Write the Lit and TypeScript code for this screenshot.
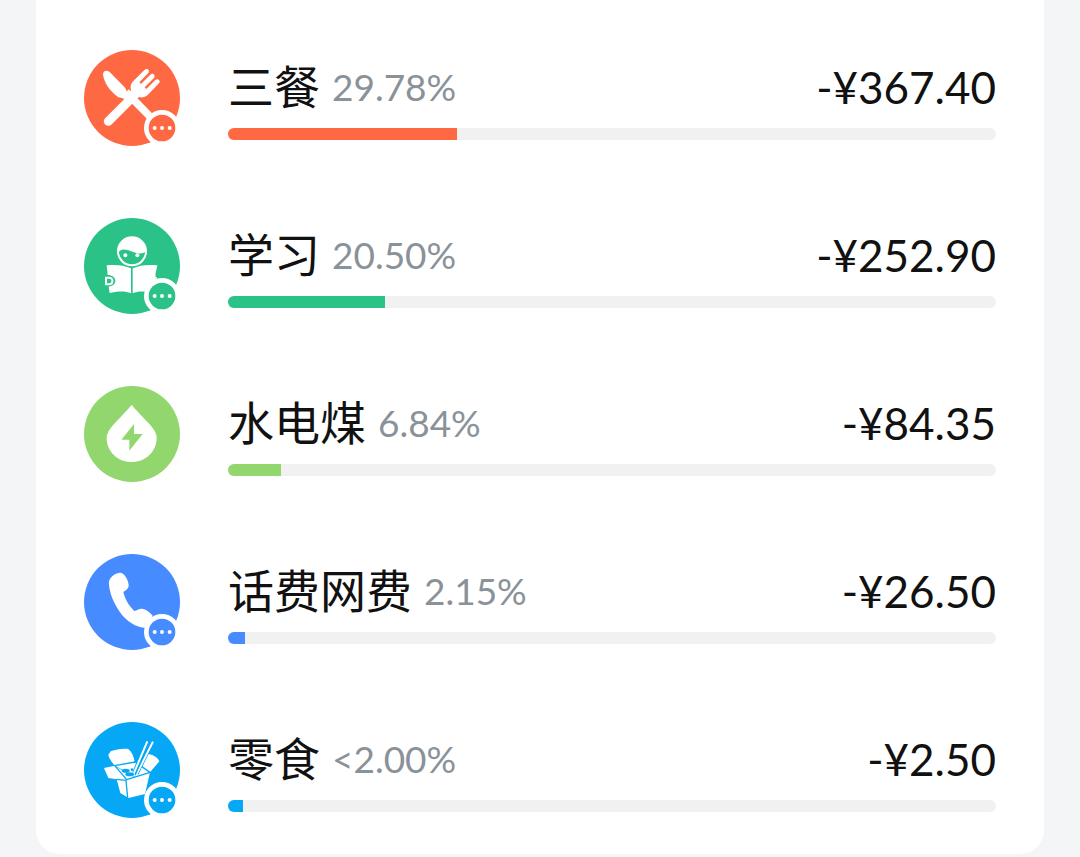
import { LitElement, html, svg, css, nothing } from "lit";
import type { SVGTemplateResult } from "lit";
import { customElement, property } from "lit/decorators.js";

interface Category {
  name: string;
  share: number;
  shareText: string;
  amount: string;
  color: string;
  icon: string;
  shared: boolean;
}

const CATEGORIES: Category[] = [
  { name: "三餐", share: 29.78, shareText: "29.78%", amount: "-¥367.40", color: "#fe6842", icon: "meals", shared: true },
  { name: "学习", share: 20.5, shareText: "20.50%", amount: "-¥252.90", color: "#2ac286", icon: "study", shared: true },
  { name: "水电煤", share: 6.84, shareText: "6.84%", amount: "-¥84.35", color: "#92d76d", icon: "utilities", shared: false },
  { name: "话费网费", share: 2.15, shareText: "2.15%", amount: "-¥26.50", color: "#468bff", icon: "phone", shared: true },
  { name: "零食", share: 2, shareText: "<2.00%", amount: "-¥2.50", color: "#06a8f5", icon: "snacks", shared: true },
];

// Glyphs share a 288-unit disc centred on (168, 168); currentColor is the disc colour.
const GLYPHS: Record<string, SVGTemplateResult> = {
  meals: svg`
    <path fill="#fff" d="M81 96C82 86 92 83 101 90L146 136C151 142 150 149 156 154L168 166L154 180C146 170 139 168 127 166C100 146 83 120 81 96Z"/>
    <path d="M97 238L166 169" stroke="#fff" stroke-width="27" stroke-linecap="round"/>
    <path d="M150 150L228 230" stroke="#fff" stroke-width="23"/>
    <path fill="#fff" d="M154 156L165 146C162 133 164 125 172 117L206 83C214 77 223 86 217 93L190 121L195 126L223 98C230 91 240 100 234 108L206 136L211 141L238 114C246 107 255 117 249 124L215 159C207 166 198 168 189 165L176 177Z"/>`,
  study: svg`
    <circle cx="168" cy="124" r="42" fill="none" stroke="#fff" stroke-width="6"/>
    <path fill="#fff" d="M125 124C124 97 144 81 168 81C194 81 212 101 211 124C197 134 184 130 171 126C155 120 140 114 130 124Z"/>
    <circle cx="148" cy="136" r="6" fill="#fff"/>
    <circle cx="184" cy="136" r="6" fill="#fff"/>
    <path fill="#fff" d="M92 166C119 163 146 166 165 175V250C147 241 120 244 101 249L98 230C110 228 118 222 118 213C118 202 108 195 95 195Z"/>
    <path fill="#fff" d="M244 166C217 163 189 166 170 175V250C188 241 208 244 234 249L239 195C224 195 214 203 215 216L230 232Z"/>
    <path d="M90 203H98C113 203 113 223 98 223H90Z" fill="none" stroke="#fff" stroke-width="6"/>
    <path d="M242 204H233C223 204 219 211 223 220" fill="none" stroke="#fff" stroke-width="6"/>`,
  utilities: svg`
    <path fill="#fff" d="M167 80C180 97 202 117 220 138C234 153 242 166 242 180C242 221 209 252 167 252C125 252 92 221 92 180C92 163 104 150 119 133C135 114 153 99 167 80Z"/>
    <path fill="currentColor" d="M174 138L136 185H160V218L200 168H174Z"/>`,
  phone: svg`
    <path fill="#fff" d="M99 115C95 99 114 82 131 80C145 79 156 101 158 116C159 126 151 132 142 138C148 163 160 180 175 195C184 193 191 186 202 189C213 192 224 201 230 209L210 245C183 246 151 226 131 197C112 170 101 142 99 115Z"/>`,
  snacks: svg`
    <path fill="#fff" d="M97 122L104 112C121 106 138 103 157 105C168 114 174 128 176 145L190 149L214 120C232 122 245 130 250 142L222 175L207 240L158 252L133 237L122 196L97 192L84 162L116 155C106 142 98 131 97 122Z"/>
    <path d="M116 155L177 144L222 175L152 197ZM121 196L150 199L155 252" stroke="currentColor" stroke-width="4" stroke-linejoin="round"/>
    <path d="M116 155L176 189" stroke="currentColor" stroke-width="2"/>
    <ellipse cx="149" cy="170" rx="12" ry="6" fill="currentColor"/>
    <ellipse cx="161" cy="181" rx="13" ry="6" fill="currentColor"/>
    <circle cx="168" cy="167" r="4" fill="currentColor"/>
    <path d="M213 82L174 177M230 83L182 180" stroke="currentColor" stroke-width="11"/>
    <path d="M214 82L174 177M231 83L182 180" stroke="#fff" stroke-width="6"/>
    <path d="M205 120L177 184" stroke="currentColor" stroke-width="4"/>`,
};

@customElement("category-icon")
export class CategoryIcon extends LitElement {
  @property() icon = "";
  @property({ type: Boolean }) shared = false;

  static styles = css`
    :host {
      display: block;
      flex: none;
      width: 96px;
      height: 96px;
    }
    .disc {
      display: block;
      width: 100%;
      height: 100%;
    }
  `;

  render() {
    return html`
      <svg class="disc" viewBox="24 24 288 288" fill="none" aria-hidden="true">
        <circle cx="168" cy="168" r="144" fill="currentColor" />
        ${GLYPHS[this.icon] ?? nothing}
        ${this.shared
          ? svg`
            <circle cx="258" cy="258" r="54" fill="#fff"/>
            <circle cx="258" cy="258" r="40" fill="currentColor"/>
            <g fill="#fff">
              <circle cx="236" cy="258" r="6"/>
              <circle cx="258" cy="258" r="6"/>
              <circle cx="281" cy="258" r="6"/>
            </g>`
          : nothing}
      </svg>
    `;
  }
}

@customElement("category-row")
export class CategoryRow extends LitElement {
  @property({ attribute: false }) category!: Category;

  static styles = css`
    :host {
      display: flex;
      gap: 48px;
    }
    .body {
      flex: 1;
      min-width: 0;
      display: flex;
      flex-direction: column;
      gap: 13px;
      padding-top: 9px;
    }
    .line {
      display: flex;
      align-items: center;
      gap: 12px;
      height: 56px;
      line-height: 56px;
      white-space: nowrap;
    }
    .name {
      font-size: 46px;
      color: #111;
    }
    .share {
      font-size: 37px;
      color: #8a9299;
    }
    .amount {
      margin-left: auto;
      font-size: 44px;
      color: #111;
    }
    .track {
      height: 12px;
      border-radius: 6px;
      background: #f1f1f1;
      overflow: hidden;
    }
    .fill {
      height: 100%;
      background: currentColor;
    }
  `;

  render() {
    const c = this.category;
    return html`
      <category-icon style="color: ${c.color}" .icon=${c.icon} .shared=${c.shared}></category-icon>
      <div class="body">
        <div class="line">
          <span class="name">${c.name}</span>
          <span class="share">${c.shareText}</span>
          <span class="amount">${c.amount}</span>
        </div>
        <div class="track" role="progressbar" aria-label=${c.name} aria-valuenow=${c.share}>
          <div class="fill" style="width: ${c.share}%; color: ${c.color}"></div>
        </div>
      </div>
    `;
  }
}

@customElement("app-root")
export class AppRoot extends LitElement {
  static styles = css`
    :host {
      display: block;
      box-sizing: border-box;
      min-height: 100vh;
      padding: 0 36px;
      background: #f4f5f7;
      font-family: Lato, "Noto Sans CJK SC", sans-serif;
    }
    .card {
      margin: 0;
      padding: 50px 48px 36px;
      list-style: none;
      display: flex;
      flex-direction: column;
      gap: 72px;
      background: #fff;
      border-radius: 0 0 24px 24px;
    }
  `;

  render() {
    return html`
      <ul class="card">
        ${CATEGORIES.map((c) => html`<li><category-row .category=${c}></category-row></li>`)}
      </ul>
    `;
  }
}
